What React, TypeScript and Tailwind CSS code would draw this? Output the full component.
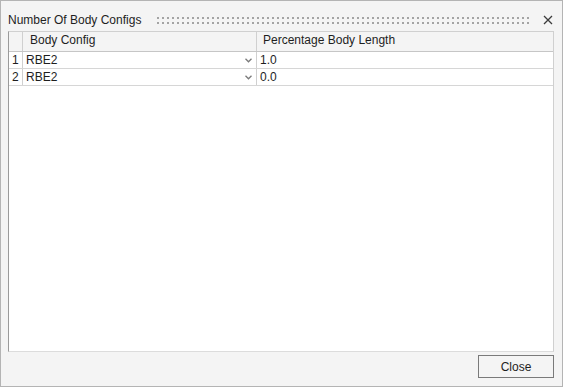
const rows = [
  { id: 1, config: "RBE2", pct: "1.0" },
  { id: 2, config: "RBE2", pct: "0.0" },
];

const Grip = () => (
  <svg className="h-[8px] flex-1" preserveAspectRatio="none">
    <defs>
      <pattern id="dots" width="5" height="5" patternUnits="userSpaceOnUse">
        <rect x="0" y="0" width="2" height="2" fill="#a4a4a4" />
      </pattern>
    </defs>
    <rect x="0" y="0" width="100%" height="8" fill="url(#dots)" />
  </svg>
);

const CloseX = () => (
  <svg width="10" height="10" viewBox="0 0 10 10" className="shrink-0">
    <path d="M1 1 L9 9 M9 1 L1 9" stroke="#3c3c3c" strokeWidth="1.3" fill="none" />
  </svg>
);

const Chevron = () => (
  <svg width="7" height="5" viewBox="0 0 7 5" className="shrink-0">
    <path d="M0.5 0.8 L3.5 3.8 L6.5 0.8" stroke="#7a7a7a" strokeWidth="1.3" fill="none" />
  </svg>
);

export default function App() {
  return (
    <div
      className="flex h-[387px] w-[563px] flex-col border border-[#b4b4b4] bg-[#f4f4f4] text-[12px] text-[#1e1e1e]"
      style={{ fontFamily: '"Liberation Sans", Arial, sans-serif' }}
    >
      {/* Title bar */}
      <div className="flex h-[29px] items-center pl-[7px] pr-[9px] pt-[8px]">
        <span className="leading-none">Number Of Body Configs</span>
        <div className="ml-[16px] mr-[12px] flex flex-1 items-center pt-[3px]">
          <Grip />
        </div>
        <CloseX />
      </div>

      {/* Table */}
      <div className="ml-[7px] mr-[8px] mt-[1px] h-[321px] border-l border-l-[#9a9a9a] border-t border-t-[#d0d0d0] border-b border-b-[#dcdcdc] border-r border-r-[#d0d0d0] bg-white">
        <div className="flex h-[20px] border-b border-[#c6c6c6] bg-[#f4f4f4]">
          <div className="w-[14px] border-r border-[#d0d0d0]" />
          <div className="flex w-[234px] items-end border-r border-[#d0d0d0] pb-[2px] pl-[7px]">Body Config</div>
          <div className="flex flex-1 items-end pb-[2px] pl-[6px]">Percentage Body Length</div>
        </div>
        {rows.map((r) => (
          <div key={r.id} className="flex h-[17px] border-b border-[#d6d6d6]">
            <div className="flex w-[14px] items-center border-r border-[#d0d0d0] pl-[3px]">{r.id}</div>
            <div className="flex w-[234px] items-center justify-between border-r border-[#d0d0d0] pl-[3px] pr-[4px]">
              <span>{r.config}</span>
              <Chevron />
            </div>
            <div className="flex flex-1 items-center pl-[3px]">{r.pct}</div>
          </div>
        ))}
      </div>

      {/* Footer */}
      <div className="flex justify-end pr-[8px] pt-[3px]">
        <button className="h-[23px] w-[76px] border border-[#7a7a7a] bg-[#f4f4f4] text-[12px] text-[#1e1e1e]">
          Close
        </button>
      </div>
    </div>
  );
}
